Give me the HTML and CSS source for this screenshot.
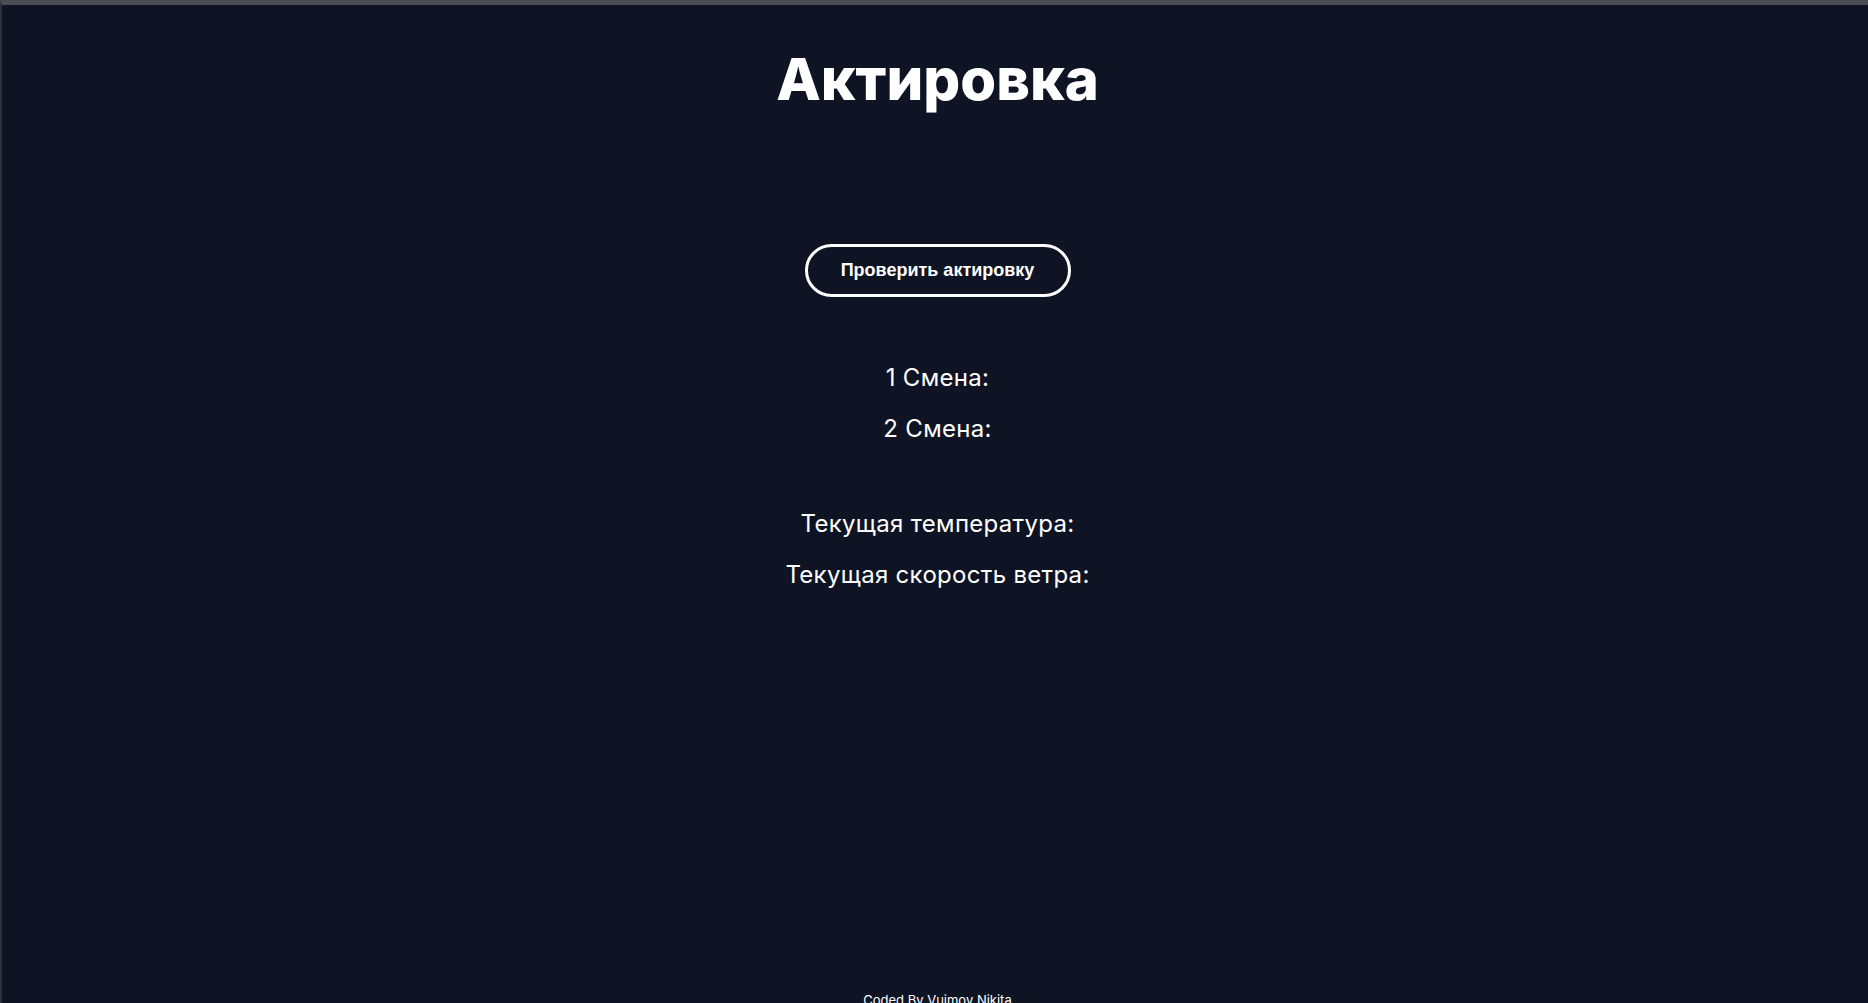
FILE: index.html
```html
<!DOCTYPE html>
<html lang="ru">
<head>
<meta charset="utf-8">
<title>Актировка</title>
<link rel="stylesheet" href="styles.css">
</head>
<body>
<div class="page">
  <main class="main">
    <h1 class="title">Актировка</h1>
    <button class="check-btn">Проверить актировку</button>
    <section class="shifts">
      <p class="line">1 Смена:</p>
      <p class="line">2 Смена:</p>
    </section>
    <section class="weather">
      <p class="line">Текущая температура:</p>
      <p class="line">Текущая скорость ветра:</p>
    </section>
  </main>
  <footer class="footer">Coded By Vujmov Nikita</footer>
</div>
</body>
</html>
```
FILE: styles.css
```css
html, body {
  margin: 0;
  padding: 0;
  height: 100%;
  overflow: hidden;
  background: #0f1424;
}
.page {
  box-sizing: border-box;
  height: 1003px;
  border-top: 5px solid #4b4c56;
  border-left: 2px solid #2f3038;
  padding-left: 5px;
  background: #0f1424;
  color: #ffffff;
  font-family: Inter, "Noto Sans", sans-serif;
  display: flex;
  flex-direction: column;
  align-items: center;
}
.main {
  flex: 1;
  display: flex;
  flex-direction: column;
  align-items: center;
}
.title {
  margin: 39px 0 0;
  font-family: Inter, "Noto Sans", sans-serif;
  font-size: 58px;
  font-weight: 800;
  line-height: 70px;
  letter-spacing: 0;
}
.check-btn {
  margin-top: 130px;
  width: 266px;
  height: 53px;
  border: 3px solid #ffffff;
  border-radius: 27px;
  background: transparent;
  color: #ffffff;
  font-family: "Liberation Sans", Arial, sans-serif;
  font-weight: bold;
  font-size: 18px;
  cursor: pointer;
}
.shifts {
  margin-top: 66px;
  display: flex;
  flex-direction: column;
  align-items: center;
  gap: 22px;
}
.weather {
  margin-top: 66px;
  display: flex;
  flex-direction: column;
  align-items: center;
  gap: 22px;
}
.line {
  margin: 0;
  font-size: 24px;
  line-height: 29px;
  font-weight: 400;
  letter-spacing: 0.3px;
}
.footer {
  font-family: Inter, "Noto Sans", sans-serif;
  font-size: 13px;
  line-height: 16px;
  margin-bottom: -5px;
}
```
